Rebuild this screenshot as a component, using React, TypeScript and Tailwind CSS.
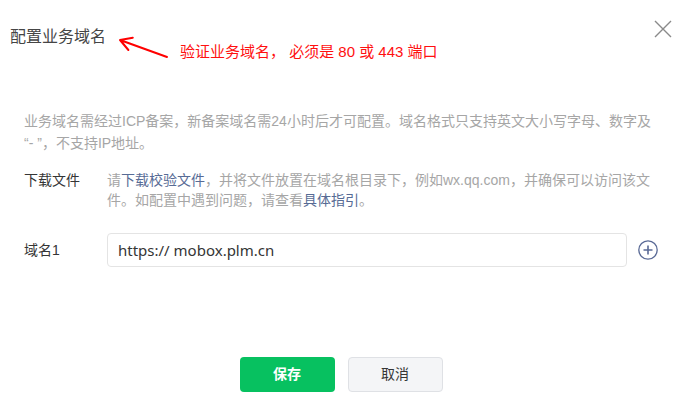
import { useState } from "react";

const font = "font-['Liberation_Sans','Noto_Sans_CJK_SC',sans-serif]";

export default function App() {
  const [domain, setDomain] = useState("https:// mobox.plm.cn");

  return (
    <div className={`relative h-[408px] w-[682px] overflow-hidden bg-white text-[14px] text-[#353535] ${font}`}>
      <div className="flex items-start justify-between pl-[10px] pr-[10px]">
        <h2 className="mt-[25px] text-[16px] leading-[24px] text-[#454545]">配置业务域名</h2>
        <button type="button" className="mt-[20px] h-[18px] w-[18px]" aria-label="关闭">
          <svg viewBox="0 0 18 18" className="h-[18px] w-[18px]" fill="none" stroke="#8a8a8a" strokeWidth="1.4">
            <path d="M1 1L17 17M17 1L1 17" />
          </svg>
        </button>
      </div>

      {/* red annotation over the header */}
      <div className="pointer-events-none absolute left-[116px] top-[34px] flex items-start">
        <svg width="56" height="28" viewBox="0 0 56 28" fill="none" stroke="#ff0000" strokeWidth="2" strokeLinecap="round">
          <path d="M4 6L51 23M4 6L16.8 3.7M4 6L12.4 16" />
        </svg>
        <span className="ml-[8px] mt-[8px] text-[15px] leading-[20px] text-[#ff1010]">
          验证业务域名， 必须是 80 或 443 端口
        </span>
      </div>

      <p className="mt-[61px] px-6 leading-[22px] text-[#a6a6a6]">
        业务域名需经过ICP备案，新备案域名需24小时后才可配置。域名格式只支持英文大小写字母、数字及
        <br />
        “- ”，不支持IP地址。
      </p>

      <div className="mt-[16px] flex pl-6 pr-[10px] leading-[20px]">
        <span className="w-[83px] shrink-0 text-[#353535]">下载文件</span>
        <p className="flex-1 text-[#a6a6a6]">
          请<a className="text-[#576b95]">下载校验文件</a>，并将文件放置在域名根目录下，例如wx.qq.com，并确保可以访问该文
          <br />
          件。如配置中遇到问题，请查看<a className="text-[#576b95]">具体指引</a>。
        </p>
      </div>

      <div className="mt-[23px] flex items-center pl-6">
        <span className="w-[83px] shrink-0 text-[#353535]">域名1</span>
        <input
          value={domain}
          onChange={(e) => setDomain(e.target.value)}
          className="h-[34px] w-[520px] rounded-[4px] border border-[#e4e4e4] px-[10px] font-['Noto_Sans','Noto_Sans_CJK_SC',sans-serif] text-[15px] text-[#353535] outline-none"
        />
        <button type="button" className="ml-[11px] h-[20px] w-[20px]" aria-label="添加">
          <svg viewBox="0 0 20 20" className="h-[20px] w-[20px]" fill="none" stroke="#5a6a96" strokeWidth="1.3">
            <circle cx="10" cy="10" r="9.2" />
            <path d="M10 5.5V14.5M5.5 10H14.5" strokeWidth="1.6" />
          </svg>
        </button>
      </div>

      <div className="mt-[90px] flex justify-center gap-[13px]">
        <button type="button" className="h-[35px] w-[95px] rounded-[4px] bg-[#07c160] text-[14px] font-bold text-white">
          保存
        </button>
        <button
          type="button"
          className="h-[35px] w-[95px] rounded-[4px] border border-[#dfe1e5] bg-[#f4f5f7] text-[14px] text-[#353535]"
        >
          取消
        </button>
      </div>
    </div>
  );
}
